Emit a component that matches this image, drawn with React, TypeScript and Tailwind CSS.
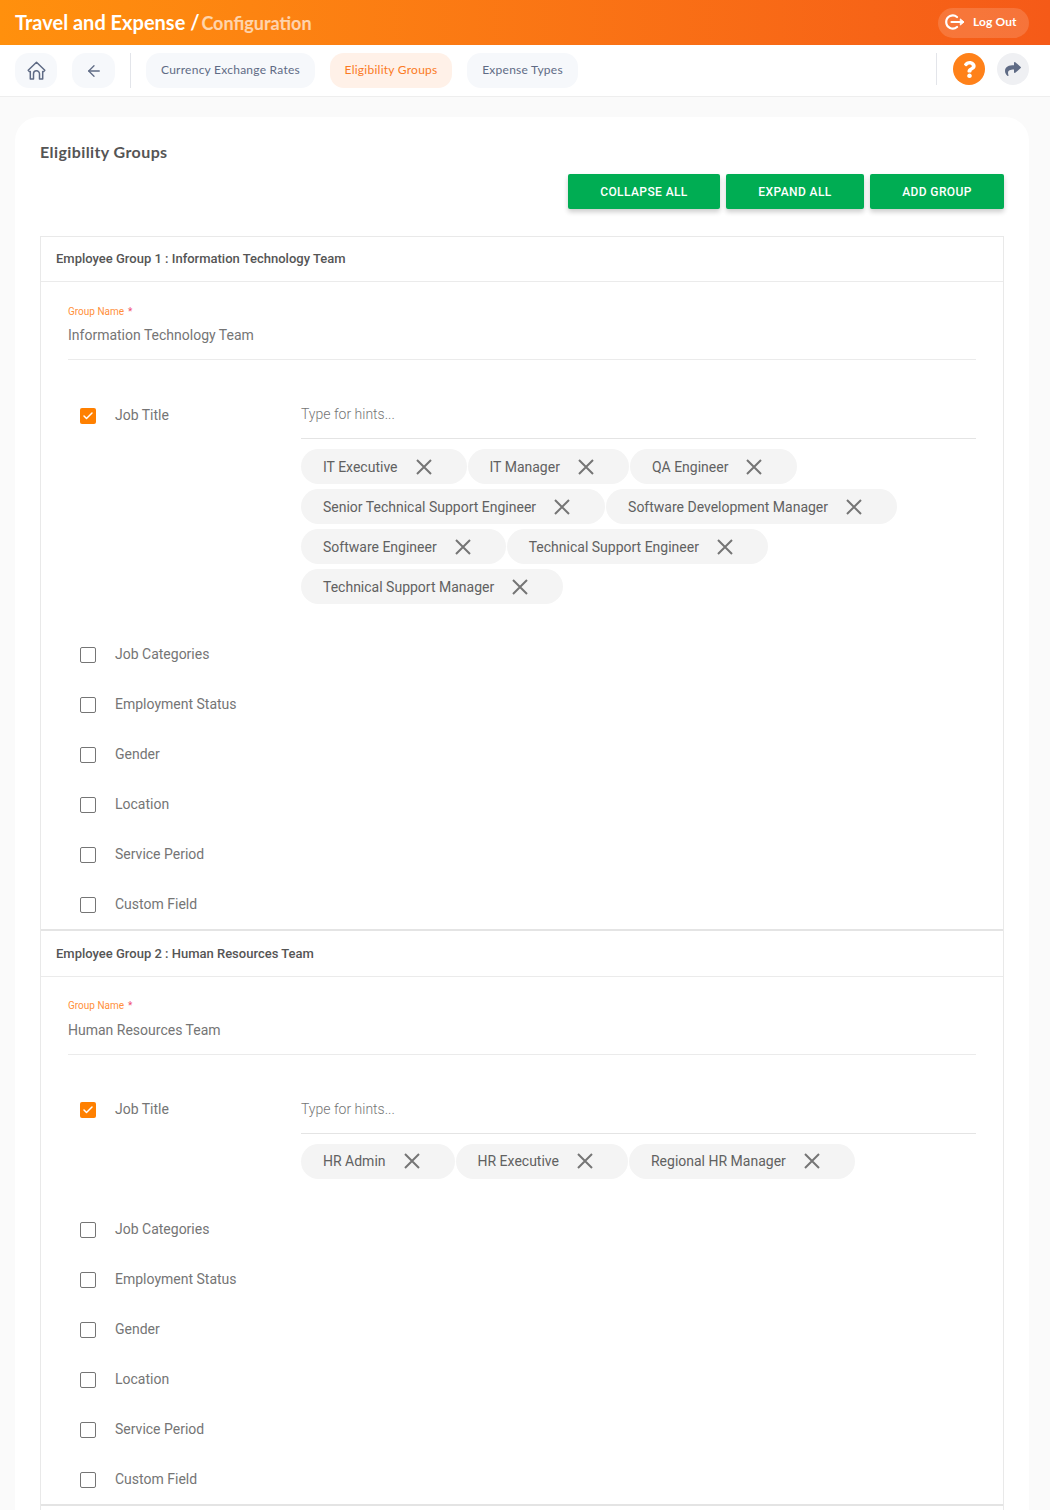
import { ArrowLeft, Check } from "lucide-react";
import { FaQuestion, FaShare } from "react-icons/fa";

const heading = "font-['Lato',sans-serif]";

const navItems = [
  { label: "Currency Exchange Rates", width: "w-[169px]", active: false },
  { label: "Eligibility Groups", width: "w-[122px]", active: true },
  { label: "Expense Types", width: "w-[111px]", active: false },
];

const otherFields = [
  "Job Categories",
  "Employment Status",
  "Gender",
  "Location",
  "Service Period",
  "Custom Field",
];

const groups = [
  {
    title: "Employee Group 1 : Information Technology Team",
    name: "Information Technology Team",
    jobs: [
      "IT Executive",
      "IT Manager",
      "QA Engineer",
      "Senior Technical Support Engineer",
      "Software Development Manager",
      "Software Engineer",
      "Technical Support Engineer",
      "Technical Support Manager",
    ],
  },
  {
    title: "Employee Group 2 : Human Resources Team",
    name: "Human Resources Team",
    jobs: ["HR Admin", "HR Executive", "Regional HR Manager"],
  },
];

function LogOutIcon() {
  return (
    <svg width="20" height="16" viewBox="0 0 20 16" fill="none" stroke="white" strokeWidth="2.2" strokeLinecap="round">
      <path d="M12 3A6.6 6.6 0 0 0 1.2 8 6.6 6.6 0 0 0 12 13" />
      <path d="M6.5 8h10" />
      <path d="M15.6 5.2 19 8l-3.4 2.8z" fill="white" strokeWidth="1" strokeLinejoin="round" />
    </svg>
  );
}

function HomeIcon() {
  return (
    <svg width="19" height="19" viewBox="0 0 19 19" fill="none" stroke="currentColor" strokeWidth="1.5" strokeLinejoin="round" strokeLinecap="round">
      <path d="M9.5 1.2 1.2 9.2l1.1 1.2h1V18h3.2v-5.2a3 3 0 0 1 6 0V18h3.200v-7.600h1l1.100-1.200z" />
    </svg>
  );
}

function CloseIcon() {
  return (
    <svg width="16" height="16" viewBox="0 0 16 16" fill="none" stroke="#757575" strokeWidth="2" className="shrink-0">
      <path d="M1 1l14 14M15 1 1 15" />
    </svg>
  );
}

function Checkbox({ checked }: { checked?: boolean }) {
  if (checked) {
    return (
      <span className="mt-[2px] flex h-4 w-4 items-center justify-center rounded-[2px] bg-[#ff8000]">
        <Check size={12} strokeWidth={3} className="text-white" />
      </span>
    );
  }
  return <span className="mt-[2px] h-4 w-4 rounded-[2px] border border-[#757575] bg-white" />;
}

function Chip({ label }: { label: string }) {
  return (
    <div className="flex h-[35px] items-center gap-[18px] rounded-full bg-[#f4f4f4] pl-[22px] pr-[35px] text-sm text-[#616161]">
      <span>{label}</span>
      <CloseIcon />
    </div>
  );
}

function GroupCard({ title, name, jobs }: { title: string; name: string; jobs: string[] }) {
  return (
    <section className="mb-[0.5px] border-b-2 border-[#e4e4e4]">
      <h2 className="flex h-[45px] items-center border-b border-[#ebebeb] pl-[15px] text-[13px] font-medium text-[#555555]">
        {title}
      </h2>
      <div className="px-[27px] pt-[22.1px]">
        <div className="h-[55.9px] border-b border-[#ebebeb]">
          <div className="flex h-[14px] items-center gap-1 text-[10px] text-[#ff8f3a]">
            Group Name <span className="text-[#f0506e]">*</span>
          </div>
          <div className="mt-[7px] text-sm leading-5 text-[#757575]">{name}</div>
        </div>
        <div className="flex pt-[34.1px]">
          <div className="flex h-[44px] w-[233px] shrink-0 items-center pb-[3px] pl-[12px]">
            <Checkbox checked />
            <span className="ml-[19px] text-sm text-[#757575]">Job Title</span>
          </div>
          <div className="min-w-0 flex-1">
            <div className="flex h-[44.9px] items-start border-b border-[#e4e4e4] pt-[10px] text-sm font-light leading-5 text-[#757575]">
              Type for hints...
            </div>
            <div className="mt-[10.1px] flex flex-wrap gap-x-px gap-y-[5px]">
              {jobs.map((job) => (
                <Chip key={job} label={job} />
              ))}
            </div>
          </div>
        </div>
        <div className="pt-[25px]">
          {otherFields.map((field) => (
            <div key={field} className="flex h-[50px] items-center pl-[12px]">
              <Checkbox />
              <span className="ml-[19px] text-sm text-[#757575]">{field}</span>
            </div>
          ))}
        </div>
      </div>
    </section>
  );
}

export default function App() {
  return (
    <div className="h-[1510px] overflow-hidden bg-[#fafafa] font-['Roboto',sans-serif]">
      <header className="flex h-[45px] items-center justify-between bg-gradient-to-r from-[#ff900d] to-[#f55a18] pl-[15px] pr-[21px]">
        <div className={`${heading} pb-[2px] text-[20px] font-bold text-white`}>
          Travel and Expense / <span className="-ml-[3px] text-[18px] font-bold text-white/65">Configuration</span>
        </div>
        <button className={`${heading} flex h-[30px] w-[91px] items-center gap-[8px] rounded-full bg-white/15 pb-px pl-[7px] text-xs font-bold tracking-[0.1px] text-white`}>
          <LogOutIcon />
          Log Out
        </button>
      </header>

      <nav className="flex h-[52px] items-start border-b border-[#eeeeee] bg-white pl-[15px] pr-[21px] pt-[8px]">
        <button className="flex h-[35px] w-[42px] items-center justify-center rounded-[14px] bg-[#f6f8fb] text-[#5f6b85]">
          <HomeIcon />
        </button>
        <button className="ml-[15px] flex h-[35px] w-[43px] items-center justify-center rounded-[14px] bg-[#f6f8fb] text-[#5f6b85]">
          <ArrowLeft size={18} strokeWidth={1.75} />
        </button>
        <div className="ml-[15px] h-[35px] w-px bg-[#e3e5ea]" />
        <div className="ml-[15px] flex gap-[15px]">
          {navItems.map((item) => (
            <button
              key={item.label}
              className={
                item.active
                  ? `${heading} h-[35px] ${item.width} rounded-[14px] bg-[#fff1e8] pb-px text-xs tracking-[0.25px] text-[#fb7a24]`
                  : `${heading} h-[35px] ${item.width} rounded-[14px] bg-[#f6f8fb] pb-px text-xs tracking-[0.25px] text-[#5f6b85]`
              }
            >
              {item.label}
            </button>
          ))}
        </div>
        <div className="ml-auto h-[32px] w-px bg-[#e3e5ea]" />
        <button className="ml-[16px] flex h-8 w-8 items-center justify-center rounded-full bg-[#ff8119] text-white">
          <FaQuestion size={17} />
        </button>
        <button className="ml-[12px] flex h-8 w-8 items-center justify-center rounded-full bg-[#eff0f3] text-[#5f6b85]">
          <FaShare size={16} />
        </button>
      </nav>

      <main className="ml-[15px] mr-[21px] mt-[20px] rounded-t-[24px] bg-white px-[25px] pt-[24px]">
        <h1 className={`${heading} text-[16px] font-bold leading-[22px] tracking-[0.4px] text-[#555555]`}>Eligibility Groups</h1>
        <div className="mt-[11px] flex justify-end gap-[6px]">
          {[
            { label: "COLLAPSE ALL", width: "w-[152px]" },
            { label: "EXPAND ALL", width: "w-[138px]" },
            { label: "ADD GROUP", width: "w-[134px]" },
          ].map((b) => (
            <button
              key={b.label}
              className={`h-[35px] ${b.width} rounded-[2px] bg-[#00ad53] text-xs font-medium tracking-[0.4px] text-white shadow-[0_3px_5px_rgba(0,0,0,0.2)]`}
            >
              {b.label}
            </button>
          ))}
        </div>
        <div className="mt-[27px] border border-[#e9e9e9] pb-[200px]">
          {groups.map((g) => (
            <GroupCard key={g.title} title={g.title} name={g.name} jobs={g.jobs} />
          ))}
        </div>
      </main>
    </div>
  );
}
